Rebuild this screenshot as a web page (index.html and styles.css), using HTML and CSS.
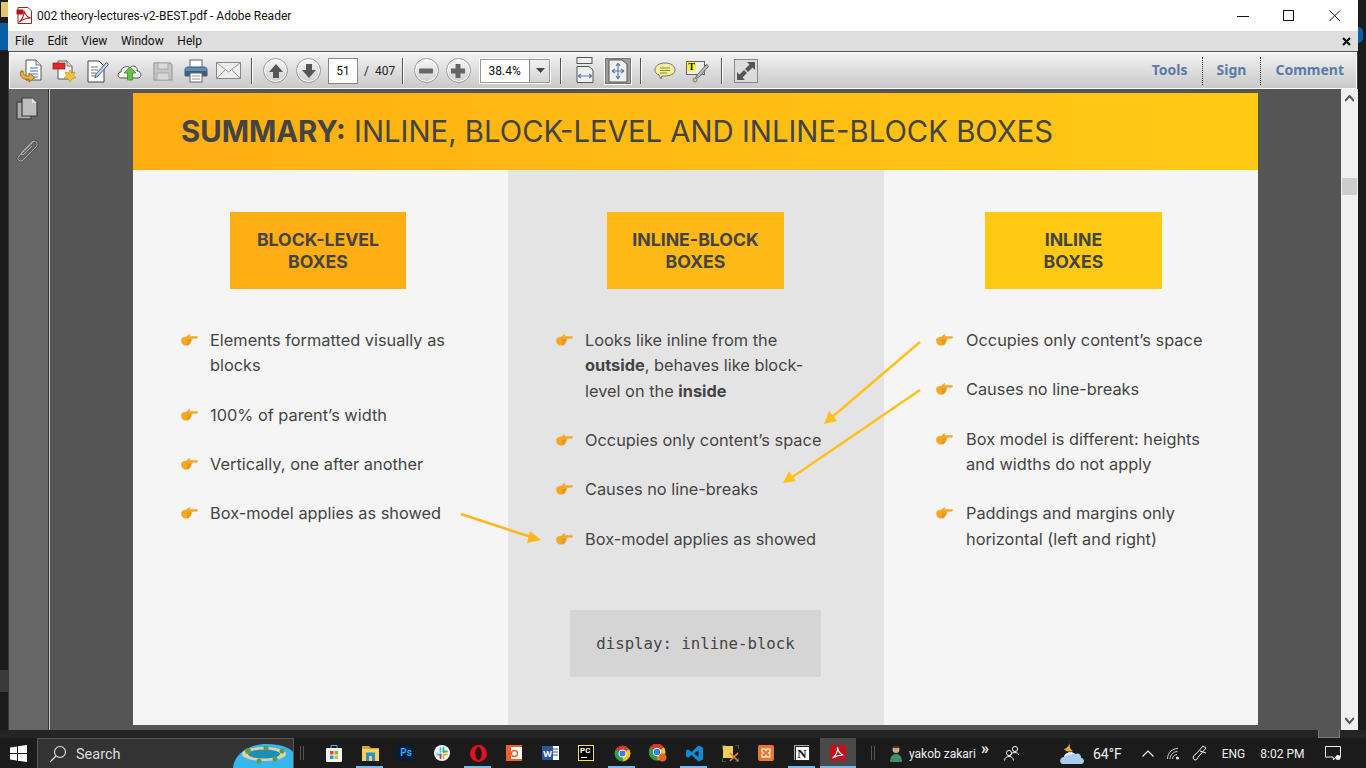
FILE: index.html
```html
<!DOCTYPE html>
<html>
<head>
  <title>002 theory-lectures-v2-BEST.pdf - Adobe Reader</title>
  <link rel="stylesheet" href="styles.css">
</head>
<body>
  <svg class="defs" width="0" height="0">
    <symbol id="hand" viewBox="0 0 17 12">
      <path d="M0.5 5.5 C1 4 2 3.4 3.4 3.2 L5.4 3 C6.4 2 7.2 1.2 8.4 0.6 C9 0.4 9.2 1 8.8 1.5 L8 2.6 L15.8 2.4 C17.2 2.5 17.2 4.1 15.8 4.2 L10.6 4.6 C11.1 5.4 10.9 6.2 10.3 6.6 C10.6 7.4 10.2 8.2 9.5 8.4 C9.6 9.3 9.1 9.9 8.4 10 C8.2 10.8 7.6 11.2 6.8 11.2 L4 11.2 C2 11.2 0.2 9.4 0.5 5.5Z" fill="#f5a623" stroke="#f5a623" stroke-width=".5"/>
      <path d="M6 6.6 L10 6.2 M6 8.4 L9.3 8.2 M6 10 L8.2 9.9" stroke="#c97f10" stroke-width=".6" fill="none"/>
    </symbol>
  </svg>

  <div class="desk-folder"></div>
  <div class="desk-blue"></div>
  <div class="desk-orb"></div>
  <div class="desk-grey"></div>
  <div class="desk-tab"></div>

  <div class="window">
    <div class="titlebar">
      <svg class="app-icon" width="17" height="17" viewBox="0 0 17 17"><path d="M2 .5H12L15.5 4V16.5H2Z" fill="#fff" stroke="#8a2a2a"/><rect x=".5" y="2.5" width="7" height="5" fill="#b3121a"/><path d="M3 15C6 13 8.500 8 8 4C10 9 12 11 15 11C11 11 7 12 3 15Z" fill="none" stroke="#c21a1a" stroke-width="1.100"/></svg>
      <span class="doc-title">002 theory-lectures-v2-BEST.pdf - Adobe Reader</span>
      <div class="win-controls">
        <div class="win-btn"><svg width="12" height="12" viewBox="0 0 12 12"><path d="M0 6.500H12" stroke="#111"/></svg></div>
        <div class="win-btn"><svg width="12" height="12" viewBox="0 0 12 12"><rect x=".5" y=".5" width="10" height="10" fill="none" stroke="#111"/></svg></div>
        <div class="win-btn"><svg width="12" height="12" viewBox="0 0 12 12"><path d="M.5 .5L11 11M11 .5L.5 11" stroke="#111"/></svg></div>
      </div>
    </div>

    <div class="menubar">
      <span class="menu-item">File</span>
      <span class="menu-item">Edit</span>
      <span class="menu-item">View</span>
      <span class="menu-item">Window</span>
      <span class="menu-item">Help</span>
      <svg class="menu-close" width="9" height="9" viewBox="0 0 9 9"><path d="M1 1L8 8M8 1L1 8" stroke="#111" stroke-width="2.200"/></svg>
    </div>

    <div class="toolbar">
      <div class="tool"><svg width="26" height="26" viewBox="0 0 26 26"><path d="M8 2H18L23 7V22H8Z" fill="#fff" stroke="#555"/><path d="M18 2V7H23" fill="#ddd" stroke="#777"/><path d="M12 10H20M12 13H20M12 16H20M12 19H20" stroke="#3a72c4" stroke-width="1.200"/><path d="M3 13C1 19 5 22 11 21V24L17 19.500L11 15V18C7 18 5 17 5 13Z" fill="#eeb040" stroke="#a06d10"/></svg></div>
      <div class="tool"><svg width="26" height="26" viewBox="0 0 26 26"><path d="M7 3H16L21 8V21H7Z" fill="#fff" stroke="#555"/><path d="M16 3V8H21" fill="#ddd" stroke="#777"/><rect x="2" y="5" width="12" height="6" fill="#e02a2a" stroke="#8e1414" stroke-width=".7"/><path d="M19 12L20.500 15L24 14L22.500 17.500L25 20L21.500 20.500L19 24L16.500 20.500L13 20L15.500 17.500L14 14L17.500 15Z" fill="#f3c23c" stroke="#b88a18" stroke-width=".6"/></svg></div>
      <div class="tool"><svg width="26" height="26" viewBox="0 0 26 26"><path d="M4 3H15L20 8V24H4Z" fill="#fff" stroke="#444"/><path d="M7 9H14M7 12H14M7 15H12M7 18H11" stroke="#777"/><path d="M11 20L12 16L22 5C23 4 25 6 24 7L14 18Z" fill="#c6d8ec" stroke="#3d5d80"/></svg></div>
      <div class="tool"><svg width="26" height="26" viewBox="0 0 26 26"><path d="M4 20C0 20 0 14 4 14C4 9 10 7 13 10C16 6 21 9 20 13C25 13 25 20 21 20Z" fill="#f4f4f4" stroke="#555"/><path d="M13 9L19 15H15.500V22H10.500V15H7Z" fill="#6cc04a" stroke="#3b8a24" stroke-width=".8"/></svg></div>
      <div class="tool"><svg width="24" height="24" viewBox="0 0 24 24"><path d="M3 4H19L21 6V21H3Z" fill="#c6c6c6" stroke="#a4a4a4" stroke-width="1.400"/><rect x="7" y="4" width="10" height="6" fill="#dcdcdc" stroke="#aaa"/><rect x="6" y="14" width="12" height="7" fill="#d8d8d8" stroke="#aaa"/></svg></div>
      <div class="tool"><svg width="26" height="26" viewBox="0 0 26 26"><rect x="7" y="2" width="12" height="8" fill="#fff" stroke="#666"/><path d="M5 9H21C23 9 24 10 24 12V18H2V12C2 10 3 9 5 9Z" fill="#5f8bb5" stroke="#3d5f80"/><rect x="2" y="13" width="22" height="5" fill="#3c5e80"/><rect x="7" y="15" width="12" height="9" fill="#fff" stroke="#666"/><path d="M9 18H17M9 21H17" stroke="#999"/></svg></div>
      <div class="tool"><svg width="26" height="18" viewBox="0 0 26 18"><rect x=".5" y=".5" width="24" height="16" fill="#eee" stroke="#888"/><path d="M.5 .5L12.500 10L24.500 .5M.5 16.500L9 8M24.500 16.500L16 8" fill="none" stroke="#999"/></svg></div>
      <div class="sep"></div>
      <div class="tool"><div class="round"><svg width="16" height="16" viewBox="0 0 16 16"><path d="M8 1L15 9H11V15H5V9H1Z" fill="#555"/></svg></div></div>
      <div class="tool"><div class="round"><svg width="16" height="16" viewBox="0 0 16 16"><path d="M8 15L15 7H11V1H5V7H1Z" fill="#555"/></svg></div></div>
      <div class="page-box">51</div>
      <span class="page-of">/</span>
      <span class="page-total">407</span>
      <div class="sep sep-after-pages"></div>
      <div class="tool tool-zoom"><div class="round"><svg width="16" height="16" viewBox="0 0 16 16"><rect x="1" y="5.500" width="14" height="5" rx="1" fill="#666"/></svg></div></div>
      <div class="tool tool-zoom"><div class="round"><svg width="16" height="16" viewBox="0 0 16 16"><path d="M5.500 1H10.500V5.500H15V10.500H10.500V15H5.500V10.500H1V5.500H5.500Z" fill="#666"/></svg></div></div>
      <div class="zoom-box">
        <span class="zoom-value">38.4%</span>
        <span class="zoom-drop"><svg width="9" height="5" viewBox="0 0 9 5"><path d="M0 0H9L4.500 5Z" fill="#444"/></svg></span>
      </div>
      <div class="sep sep-after-zoom"></div>
      <div class="tool tool-fit"><svg width="20" height="30" viewBox="0 0 20 30"><rect x="2" y="1.500" width="15" height="6" fill="#eee" stroke="#555"/><path d="M2 10.500H14L18 14V26.500H2Z" fill="#eee" stroke="#555"/><path d="M3 20H17M3 20L6 18M3 20L6 22M17 20L14 18M17 20L14 22" stroke="#5e7fb2" fill="none" stroke-width="1.200"/></svg></div>
      <div class="tool tool-fit tool-active"><svg width="20" height="24" viewBox="0 0 20 24"><path d="M1 1H14L19 5V23H1Z" fill="#f0f0f0" stroke="#555"/><path d="M10 4V20M4 12H16M10 4L8 7M10 4L12 7M10 20L8 17M10 20L12 17M4 12L7 10M4 12L7 14M16 12L13 10M16 12L13 14" stroke="#5e7fb2" fill="none" stroke-width="1.200"/></svg></div>
      <div class="sep sep-after-fit"></div>
      <div class="tool"><svg width="22" height="18" viewBox="0 0 22 18"><path d="M11 1C17 1 21 4 21 8C21 12 16 14 11 14C10 14 9 14 8 14L7 17L5 13C2 12 1 10 1 8C1 4 5 1 11 1Z" fill="#f6ef9a" stroke="#777"/><path d="M6 6H16M6 8.500H16M6 11H13" stroke="#8a8540"/></svg></div>
      <div class="tool"><svg width="24" height="24" viewBox="0 0 24 24"><rect x=".5" y="2.500" width="18" height="13" fill="#eee" stroke="#666"/><rect x="1" y="3" width="9" height="9" fill="#f7f33a"/><text class="tool-t" x="5.500" y="11">T</text><path d="M9 20L11 16L20 6C21 5 23 7 22 8L13 18Z" fill="#bbb" stroke="#666"/><circle cx="9" cy="21" r="2" fill="#e3d25e" stroke="#777"/></svg></div>
      <div class="sep sep-after-note"></div>
      <div class="tool tool-full"><div class="full-box"><svg width="20" height="20" viewBox="0 0 20 20"><path d="M11 1H19V9L16.500 6.500L12 11L9 8L13.500 3.500ZM9 19H1V11L3.500 13.500L8 9L11 12L6.500 16.500Z" fill="#555"/></svg></div></div>
      <div class="panel-tabs">
        <span class="panel-tab panel-tools">Tools</span>
        <span class="panel-tab panel-sign">Sign</span>
        <span class="panel-tab panel-comment">Comment</span>
      </div>
    </div>

    <div class="workspace">
      <div class="nav-panel">
        <svg width="22" height="24" viewBox="0 0 22 24"><rect x="1" y="5" width="14" height="17" fill="#aaa" stroke="#3c3c3c" stroke-width="1.200"/><path d="M6 1H16L21 6V19H6Z" fill="#bdbdbd" stroke="#3c3c3c" stroke-width="1.200"/><path d="M16 1V6H21" fill="#e0e0e0"/></svg>
        <svg width="24" height="26" viewBox="0 0 24 26"><path d="M19 3L4 18C1 21 5 25 8 22L21 9C24 5 20 1 17 4L7 14C5 16 7 18 9 16L17 8" fill="none" stroke="#3f3f3f" stroke-width="2.400"/><path d="M19 3L4 18C1 21 5 25 8 22L21 9C24 5 20 1 17 4L7 14C5 16 7 18 9 16L17 8" fill="none" stroke="#a8a8a8" stroke-width="1.100"/></svg>
      </div>
      <div class="doc-area">
        <div class="page">
          <div class="page-head"><b>SUMMARY:</b> INLINE, BLOCK-LEVEL AND INLINE-BLOCK BOXES</div>
          <div class="page-cols">
            <div class="col">
              <div class="card card-a">BLOCK-LEVEL<br>BOXES</div>
              <ul class="points">
                <li><svg class="hand"><use href="#hand"/></svg><span>Elements formatted visually as blocks</span></li>
                <li><svg class="hand"><use href="#hand"/></svg><span>100% of parent’s width</span></li>
                <li><svg class="hand"><use href="#hand"/></svg><span>Vertically, one after another</span></li>
                <li><svg class="hand"><use href="#hand"/></svg><span>Box-model applies as showed</span></li>
              </ul>
            </div>
            <div class="col col-mid">
              <div class="card card-b">INLINE-BLOCK<br>BOXES</div>
              <ul class="points">
                <li><svg class="hand"><use href="#hand"/></svg><span>Looks like inline from the <b>outside</b>, behaves like block-level on the <b>inside</b></span></li>
                <li><svg class="hand"><use href="#hand"/></svg><span>Occupies only content’s space</span></li>
                <li><svg class="hand"><use href="#hand"/></svg><span>Causes no line-breaks</span></li>
                <li><svg class="hand"><use href="#hand"/></svg><span>Box-model applies as showed</span></li>
              </ul>
              <div class="code-box">display: inline-block</div>
            </div>
            <div class="col col-right">
              <div class="card card-c">INLINE<br>BOXES</div>
              <ul class="points">
                <li><svg class="hand"><use href="#hand"/></svg><span>Occupies only content’s space</span></li>
                <li><svg class="hand"><use href="#hand"/></svg><span>Causes no line-breaks</span></li>
                <li><svg class="hand"><use href="#hand"/></svg><span>Box model is different: heights and widths do not apply</span></li>
                <li><svg class="hand"><use href="#hand"/></svg><span>Paddings and margins only horizontal (left and right)</span></li>
              </ul>
            </div>
          </div>
          <svg class="arrows" width="1125" height="632" viewBox="0 0 1125 632">
            <path d="M328 421L398 444" stroke="#ffb61e" stroke-width="2.500"/><path d="M408 447L394 450L397 438Z" fill="#ffb61e"/>
            <path d="M787 249L698 325" stroke="#ffc11e" stroke-width="2.500"/><path d="M691 331L696 318L704 328Z" fill="#ffc11e"/>
            <path d="M787 297L658 385" stroke="#ffc11e" stroke-width="2.500"/><path d="M650 390L656 378L663 388Z" fill="#ffc11e"/>
          </svg>
        </div>
      </div>
      <div class="scrollbar">
        <svg class="scroll-arrow" width="9" height="7" viewBox="0 0 9 7"><path d="M0 6L4.500 1L9 6" fill="none" stroke="#555" stroke-width="2"/></svg>
        <div class="scroll-thumb"></div>
        <svg class="scroll-arrow scroll-down" width="9" height="7" viewBox="0 0 9 7"><path d="M0 1L4.500 6L9 1" fill="none" stroke="#555" stroke-width="2"/></svg>
      </div>
    </div>
  </div>

  <div class="under-strip"></div>

  <div class="taskbar">
    <div class="start"><svg width="17" height="17" viewBox="0 0 17 17"><path d="M0 2.400L7 1.400V8H0ZM8 1.200L17 0V8H8ZM0 9H7V15.600L0 14.600ZM8 9H17V17L8 15.800Z" fill="#fff"/></svg></div>
    <div class="search">
      <svg width="18" height="18" viewBox="0 0 18 18"><circle cx="11" cy="7" r="5.500" fill="none" stroke="#e6e6e6" stroke-width="1.100"/><path d="M7 11L1 17" stroke="#e6e6e6" stroke-width="1.100"/></svg>
      <span class="search-text">Search</span>
      <svg class="search-art" width="60" height="25" viewBox="0 0 60 25"><path d="M0 25C1 12 14 1 34 1C48 1 57 5 60 9V25Z" fill="#35b6ee"/><ellipse cx="31" cy="11" rx="22" ry="7" fill="#e8cfa0"/><ellipse cx="31" cy="11" rx="16" ry="4.500" fill="#1a8fb8"/><circle cx="15" cy="8" r="3" fill="#5d9a4a"/><circle cx="33" cy="5" r="2.500" fill="#5d9a4a"/><circle cx="49" cy="8" r="2.500" fill="#5d9a4a"/><circle cx="42" cy="16" r="2.500" fill="#5d9a4a"/><circle cx="26" cy="18" r="2.500" fill="#5d9a4a"/></svg>
    </div>
    <div class="task-divider"></div>
    <div class="task-icons">
      <div class="task-cell"><svg width="16" height="18" viewBox="0 0 16 18"><path d="M5 4V1.500H11V4" fill="none" stroke="#4fb4e8"/><rect x="0" y="4" width="16" height="14" rx="1" fill="#f4f4f4"/><rect x="4" y="7" width="3.500" height="3.500" fill="#e2492f"/><rect x="8.500" y="7" width="3.500" height="3.500" fill="#7db93a"/><rect x="4" y="11.500" width="3.500" height="3.500" fill="#2c9ae0"/><rect x="8.500" y="11.500" width="3.500" height="3.500" fill="#f2b71f"/></svg></div>
      <div class="task-cell task-on"><svg width="17" height="15" viewBox="0 0 17 15"><path d="M0 0H7L9 2H17V4H0Z" fill="#d9a431"/><rect y="3" width="17" height="12" fill="#f7d25c"/><rect x="4" y="6.500" width="9" height="8.500" fill="#2a8fd8"/><rect x="7" y="10" width="3" height="5" fill="#f7d25c"/></svg></div>
      <div class="task-cell"><div class="ps-icon">Ps</div></div>
      <div class="task-cell"><svg width="16" height="16" viewBox="0 0 16 16"><circle cx="8" cy="8" r="8" fill="#f6f6f6"/><path d="M6.500 3V7M3 9.500H7" stroke="#36c5f0" stroke-width="1.800" stroke-linecap="round"/><path d="M9.500 3V7" stroke="#2eb67d" stroke-width="1.800" stroke-linecap="round"/><path d="M13 6.500H9.500" stroke="#2eb67d" stroke-width="1.800" stroke-linecap="round"/><path d="M9.500 9.500V13M13 9.500H9.500" stroke="#ecb22e" stroke-width="1.800" stroke-linecap="round"/><path d="M6.500 10V13" stroke="#e01e5a" stroke-width="1.800" stroke-linecap="round"/></svg></div>
      <div class="task-cell task-on"><svg width="17" height="17" viewBox="0 0 17 17"><circle cx="8.500" cy="8.500" r="8.500" fill="#e3101f"/><ellipse cx="8.500" cy="8.500" rx="3.200" ry="6.500" fill="#1a1a1a"/></svg></div>
      <div class="task-cell"><svg width="16" height="16" viewBox="0 0 16 16"><rect width="16" height="16" fill="#fff"/><path d="M0 0H5V16H0ZM5 0H16V2H5ZM5 14H16V16H5Z" fill="#e8622c"/><circle cx="8.500" cy="8.500" r="3" fill="none" stroke="#e8622c" stroke-width="1.400"/></svg></div>
      <div class="task-cell"><svg width="17" height="16" viewBox="0 0 17 16"><rect x="6" y="1" width="11" height="14" fill="#fff"/><path d="M10 4H16M10 7H16M10 10H16" stroke="#2b5aa8"/><rect y="1" width="11" height="14" fill="#2b579a"/><text class="word-w" x="5.500" y="11.500">W</text></svg></div>
      <div class="task-cell"><div class="pc-icon">PC<i></i></div></div>
      <div class="task-cell task-on"><svg width="17" height="17" viewBox="0 0 18 18"><path d="M9 9L2.070 5A8 8 0 0 1 15.930 5Z" fill="#d9382c" stroke="#d9382c"/><path d="M9 9L15.930 5A8 8 0 0 1 9 17Z" fill="#f5c518" stroke="#f5c518"/><path d="M9 9L9 17A8 8 0 0 1 2.070 5Z" fill="#2f9e4f" stroke="#2f9e4f"/><circle cx="9" cy="9" r="4.200" fill="#fff"/><circle cx="9" cy="9" r="3.200" fill="#3b7de0"/></svg></div>
      <div class="task-cell"><svg width="18" height="18" viewBox="0 0 18 18"><path d="M8 8L1.070 4A8 8 0 0 1 14.930 4Z" fill="#d9382c" stroke="#d9382c"/><path d="M8 8L14.930 4A8 8 0 0 1 8 16Z" fill="#f5c518" stroke="#f5c518"/><path d="M8 8L8 16A8 8 0 0 1 1.070 4Z" fill="#2f9e4f" stroke="#2f9e4f"/><circle cx="8" cy="8" r="4.200" fill="#fff"/><circle cx="8" cy="8" r="3.200" fill="#3b7de0"/><circle cx="13.500" cy="13.500" r="4" fill="#e8622c"/></svg></div>
      <div class="task-cell task-on"><svg width="17" height="17" viewBox="0 0 17 17"><path fill-rule="evenodd" d="M12.500 .5L17 2.500V14.500L12.500 16.500L5.500 10L2 12.800L0 11.500V5.500L2 4.200L5.500 7ZM12.500 5L8 8.500L12.500 12Z" fill="#0f8ad8"/></svg></div>
      <div class="task-cell"><svg width="17" height="17" viewBox="0 0 17 17"><rect x="1" y="1" width="10" height="12" fill="#f1cc5a"/><path d="M0 4V0H4M13 0H17V4M0 13V17H4M17 13V17H13" fill="none" stroke="#3f9a5a" stroke-width="1.200"/><path d="M8 8L16 16M16 8L8 16" stroke="#e8822c" stroke-width="1.600"/></svg></div>
      <div class="task-cell"><svg width="16" height="16" viewBox="0 0 16 16"><rect width="16" height="16" rx="2" fill="#e8772e"/><path d="M4 4H7L8 5.500L9 4H12V7L10.500 8L12 9V12H9L8 10.500L7 12H4V9L5.500 8L4 7Z" fill="none" stroke="#fbe3cf" stroke-width="1.400"/></svg></div>
      <div class="task-cell task-on"><div class="notion-icon">N</div></div>
      <div class="task-cell task-on task-active"><svg width="16" height="16" viewBox="0 0 16 16"><rect width="16" height="16" rx="1" fill="#c1121c"/><path d="M2.500 13C6 11 8 6 7.500 2.500C8.500 7 10 9.500 13.500 10C10 10 6 11 2.500 13Z" fill="none" stroke="#fff" stroke-width="1.200"/></svg></div>
    </div>
    <div class="task-divider task-divider-b"></div>
    <svg class="avatar" width="12" height="17" viewBox="0 0 12 17"><circle cx="6" cy="4.500" r="3.500" fill="#c9a58a"/><path d="M3 3C3 0 9 0 9 3Z" fill="#3a3a3a"/><path d="M0 17C0 11 3 9 6 9C9 9 12 11 12 17Z" fill="#3f8f6a"/></svg>
    <span class="user-name">yakob zakari</span>
    <span class="chevrons">»</span>
    <svg class="people" width="15" height="16" viewBox="0 0 15 16"><circle cx="11" cy="4" r="2.600" fill="none" stroke="#eee"/><path d="M6 12C6 9 8 7.500 11 7.500C13 7.500 14.500 8.500 15 10" fill="none" stroke="#eee"/><circle cx="5" cy="8" r="2.600" fill="none" stroke="#eee" /><path d="M.5 15.500C.5 13 2.500 11.500 5 11.500C7.500 11.500 9.500 13 9.500 15.500" fill="none" stroke="#eee"/></svg>
    <svg class="weather" width="25" height="24" viewBox="0 0 25 24"><path d="M11 0C9 3 9 8 13 10C11 11 6 11 4 8C6 8 9 5 11 0Z" fill="#f5a623"/><path d="M3 23C-1 23 -1 16 4 16C5 11 12 10 15 13C19 11 22 15 21 17C25 17 25 23 21 23Z" fill="#a9cdf0"/><path d="M4 16C5 11 12 10 15 13C12 13 7 14 4 16Z" fill="#e3eefa"/></svg>
    <span class="temp">64°F</span>
    <svg class="tray-up" width="12" height="7" viewBox="0 0 12 7"><path d="M.5 6.500L6 1L11.500 6.500" fill="none" stroke="#eee" stroke-width="1.200"/></svg>
    <svg class="tray-wifi" width="13" height="13" viewBox="0 0 13 13"><path d="M.5 12C.5 6 5 1.500 11 1.500M3 12C3 8 6.500 4.500 10.500 4.500M5.500 12C5.500 9.500 7.500 7.500 10 7.500" fill="none" stroke="#ddd" stroke-width=".9"/><circle cx="10.500" cy="11" r="1.500" fill="#eee"/></svg>
    <svg class="tray-pen" width="16" height="16" viewBox="0 0 16 16"><path d="M3 15C0 14 1 10 4 9L11 1L14 3L7 11C5 14 5 15 3 15ZM8 6L14 8" fill="none" stroke="#eee" stroke-width="1"/></svg>
    <span class="lang">ENG</span>
    <span class="clock">8:02 PM</span>
    <svg class="notify" width="16" height="15" viewBox="0 0 16 15"><path d="M.5 .500H15.500V11H11L8.500 14L8 11H.5Z" fill="none" stroke="#eee"/><circle cx="13" cy="11.500" r="2.500" fill="#eee"/></svg>
  </div>
</body>
</html>
```

FILE: styles.css
```css
* {
  box-sizing: border-box;
}

html, body {
  margin: 0;
  padding: 0;
}

body {
  position: relative;
  width: 1366px;
  height: 768px;
  overflow: hidden;
  background-color: #1b1b1b;
  font-family: Roboto, sans-serif;
}

.defs {
  position: absolute;
}

/* bits of the desktop showing round the window */
.desk-folder {
  position: absolute;
  left: 1px;
  top: 2px;
  width: 7px;
  height: 15px;
  background-color: #e3c56c;
}

.desk-blue {
  position: absolute;
  left: 0;
  top: 23px;
  width: 8px;
  height: 27px;
  background-color: #0a5ea8;
}

.desk-orb {
  position: absolute;
  left: 1358px;
  top: 27px;
  width: 5px;
  height: 16px;
  border-radius: 0 8px 8px 0;
  background-color: #0a5ea8;
}

.desk-grey {
  position: absolute;
  left: 0;
  top: 670px;
  width: 8px;
  height: 22px;
  background-color: #3a3a3a;
}

.desk-tab {
  position: absolute;
  left: 1318px;
  top: 730px;
  width: 22px;
  height: 8px;
  background-color: #555;
  border: 1px solid #777;
  border-top: 0;
}

.window {
  position: relative;
  width: 1350px;
  height: 730px;
  margin-left: 8px;
  display: flex;
  flex-direction: column;
  background-color: #3a3a3a;
}

.titlebar {
  height: 31px;
  display: flex;
  align-items: center;
  background-color: #fff;
  padding-left: 8px;
}

.app-icon {
  margin-right: 4px;
}

.doc-title {
  font-size: 12px;
  color: #111;
}

.win-controls {
  display: flex;
  margin-left: auto;
}

.win-btn {
  width: 46px;
  height: 31px;
  display: flex;
  align-items: center;
  justify-content: center;
}

.menubar {
  height: 20px;
  display: flex;
  align-items: center;
  background-color: #dedede;
  padding-left: 7px;
  font-size: 12px;
  color: #111;
}

.menu-item {
  margin-right: 13.600px;
}

.menu-close {
  margin-left: auto;
  margin-right: 7px;
}

.toolbar {
  height: 37px;
  margin: 1px 1px 0 1px;
  display: flex;
  align-items: center;
  padding-left: 4px;
  border: 1px solid #fff;
  background: linear-gradient(#f2f2f2, #c9c9c9);
  box-shadow: 0 -1px 0 #555;
}

.tool {
  width: 33px;
  height: 30px;
  flex: none;
  display: flex;
  align-items: center;
  justify-content: center;
}

.sep {
  width: 2px;
  height: 26px;
  flex: none;
  margin: 0 6px;
  background: linear-gradient(90deg, #555 50%, #fff 50%);
}

.round {
  width: 25px;
  height: 25px;
  display: flex;
  align-items: center;
  justify-content: center;
  border-radius: 50%;
  border: 1px solid #9a9a9a;
  background: linear-gradient(#f6f6f6, #cfcfcf);
  box-shadow: inset 0 0 0 1px #fff;
}

.page-box {
  width: 30px;
  height: 26px;
  margin-left: 3px;
  background-color: #fff;
  border: 1px solid #888;
  font-size: 12px;
  line-height: 24px;
  text-align: center;
  color: #111;
}

.page-of {
  margin-left: 6px;
  font-size: 12px;
  color: #222;
}

.page-total {
  margin-left: 6px;
  font-size: 12px;
  color: #222;
}

.sep-after-pages {
  margin-left: 7px;
  margin-right: 6px;
}

.tool-zoom {
  width: 32px;
}

.zoom-box {
  width: 72px;
  height: 26px;
  margin-left: 5px;
  flex: none;
  display: flex;
  border: 1px solid #fff;
  outline: 1px solid #999;
  outline-offset: -2px;
  background-color: #fff;
}

.zoom-value {
  width: 49px;
  font-size: 12px;
  line-height: 24px;
  text-align: center;
  color: #111;
}

.zoom-drop {
  flex: 1;
  display: flex;
  align-items: center;
  justify-content: center;
  background: linear-gradient(#f2f2f2, #d4d4d4);
  border-left: 1px solid #888;
}

.sep-after-zoom {
  margin-left: 9px;
  margin-right: 8px;
}

.tool-fit {
  width: 30px;
}

.tool-active {
  width: 28px;
  height: 28px;
  margin-left: 4px;
  background-color: #9d9d9d;
  border: 1px solid #fff;
  outline: 1px solid #777;
  outline-offset: -2px;
}

.sep-after-fit {
  margin-left: 8px;
  margin-right: 6px;
}

.sep-after-note {
  margin-left: 7px;
  margin-right: 6px;
}

.full-box {
  width: 24px;
  height: 24px;
  display: flex;
  align-items: center;
  justify-content: center;
  border: 1px solid #888;
  background-color: #dcdcdc;
}

.panel-tabs {
  margin-left: auto;
  height: 28px;
  display: flex;
  align-items: center;
  font-family: "Noto Sans", sans-serif;
  font-weight: 700;
  font-size: 14px;
  color: #5b7ba6;
}

.panel-tab {
  height: 28px;
  line-height: 26px;
}

.panel-tools {
  padding-right: 14px;
}

.panel-sign {
  padding: 0 14px;
  border-left: 1px dotted #333;
  border-right: 1px dotted #333;
}

.panel-comment {
  padding: 0 12px 0 14px;
}

.workspace {
  flex: 1;
  min-height: 0;
  display: flex;
}

.nav-panel {
  width: 40px;
  margin-left: 1px;
  padding-top: 8px;
  padding-right: 3px;
  display: flex;
  flex-direction: column;
  align-items: center;
  gap: 17px;
  background-color: #666;
  border-right: 1px solid #333;
}

.doc-area {
  flex: 1;
  border-left: 1px solid #c8c8c8;
  background-color: #555;
  padding: 4px 0 0 83px;
}

.page {
  position: relative;
  width: 1125px;
  height: 632px;
  font-family: Inter, sans-serif;
  color: #444;
}

.page-head {
  height: 77px;
  padding-left: 48px;
  font-size: 29.300px;
  line-height: 78px;
  color: #444;
  background: linear-gradient(90deg, #ffae12, #ffca14);
}

.page-cols {
  display: grid;
  grid-template-columns: 375px 376px 374px;
  height: 555px;
  background-color: #f5f5f5;
}

.col {
  padding-top: 42px;
}

.col-mid {
  background-color: #e4e4e4;
}

.card {
  width: 176px;
  height: 77px;
  margin-left: 97px;
  display: flex;
  align-items: center;
  justify-content: center;
  text-align: center;
  font-size: 17.700px;
  line-height: 22px;
  font-weight: 700;
  color: #444;
}

.card-a {
  background-color: #ffae14;
}

.card-b {
  width: 177px;
  margin-left: 99px;
  background-color: #ffb916;
}

.card-c {
  width: 177px;
  margin-left: 101px;
  background-color: #ffc914;
}

.points {
  list-style: none;
  margin: 39px 0 0 0;
  padding: 0 0 0 48px;
  display: flex;
  flex-direction: column;
  gap: 23.900px;
  font-size: 16.350px;
  line-height: 25.400px;
}

.col-right .points {
  padding-left: 52px;
}

.points li {
  display: flex;
  width: 300px;
}

.hand {
  width: 17px;
  height: 12px;
  flex: none;
  margin-top: 6px;
  margin-right: 12px;
}

.col-right .hand {
  margin-right: 13px;
}

.points span {
  width: 240px;
}

.code-box {
  width: 251px;
  height: 67px;
  margin: 57.500px 0 0 62px;
  background-color: #d5d5d5;
  font-family: "DejaVu Sans Mono", monospace;
  font-size: 15.700px;
  line-height: 67px;
  text-align: center;
  color: #444;
}

.arrows {
  position: absolute;
  left: 0;
  top: 0;
}

.scrollbar {
  width: 17px;
  display: flex;
  flex-direction: column;
  align-items: center;
  background-color: #f0f0f0;
}

.scroll-arrow {
  flex: none;
  margin-top: 6px;
}

.scroll-thumb {
  width: 15px;
  height: 17px;
  margin-top: 76px;
  background-color: #cdcdcd;
}

.scroll-down {
  margin-top: auto;
  margin-bottom: 6px;
}

.under-strip {
  height: 8px;
  background-color: #242424;
}

.taskbar {
  height: 30px;
  display: flex;
  align-items: center;
  background-color: #1b1b1b;
  color: #eee;
  font-size: 12px;
}

.start {
  width: 37px;
  height: 30px;
  display: flex;
  align-items: center;
  justify-content: center;
}

.search {
  position: relative;
  width: 257px;
  height: 30px;
  display: flex;
  align-items: center;
  padding-left: 11px;
  background-color: #333;
  border: 1px solid #585858;
  border-bottom: 0;
  overflow: hidden;
}

.search-text {
  margin-left: 9px;
  margin-top: 2px;
  font-size: 14.500px;
  color: #ddd;
}

.search-art {
  position: absolute;
  right: 0;
  bottom: 0;
}

.task-divider {
  width: 4px;
  height: 14px;
  flex: none;
  margin-left: 6px;
  margin-right: 12px;
  border-left: 1px solid #555;
  border-right: 1px solid #555;
}

.task-icons {
  display: flex;
}

.task-cell {
  position: relative;
  width: 36px;
  height: 30px;
  display: flex;
  align-items: center;
  justify-content: center;
}

.task-on::after {
  content: "";
  position: absolute;
  left: 4px;
  right: 5px;
  bottom: 0;
  height: 2px;
  background-color: #76b9ed;
}

.task-active {
  background-color: #4a4a4a;
}

.task-active::after {
  left: 0;
  right: 0;
}

.ps-icon {
  width: 16px;
  height: 16px;
  border-radius: 2px;
  background-color: #001e36;
  color: #31a8ff;
  font-size: 10px;
  font-weight: 700;
  line-height: 16px;
  text-align: center;
}

.word-w {
  font-family: "Noto Sans", sans-serif;
  font-size: 9px;
  font-weight: 700;
  fill: #fff;
  text-anchor: middle;
}

.tool-t {
  font-family: "Liberation Serif", serif;
  font-size: 10px;
  font-weight: 700;
  fill: #222;
  text-anchor: middle;
}

.pc-icon {
  position: relative;
  width: 16px;
  height: 16px;
  background-color: #000;
  border: 1px solid #f5e23a;
  color: #fff;
  font-size: 8px;
  font-weight: 700;
  line-height: 10px;
  padding-left: 1px;
}

.pc-icon i {
  position: absolute;
  left: 2px;
  bottom: 2px;
  width: 6px;
  height: 1px;
  background-color: #fff;
}

.notion-icon {
  width: 15px;
  height: 15px;
  background-color: #fff;
  border: 1px solid #222;
  color: #111;
  font-family: "Liberation Serif", serif;
  font-size: 13px;
  font-weight: 700;
  line-height: 13px;
  text-align: center;
  box-shadow: -1px -1px 0 #aaa;
}

.task-divider-b {
  margin-left: 15px;
  margin-right: 0;
}

.avatar {
  margin-left: 15px;
}

.user-name {
  margin-left: 7px;
  margin-top: 2px;
  width: 66px;
  white-space: nowrap;
}

.chevrons {
  margin-left: 6px;
  margin-top: -10px;
  font-size: 16px;
  font-weight: 700;
}

.people {
  margin-left: 15px;
}

.weather {
  margin-left: 41px;
}

.temp {
  margin-left: 8px;
  margin-top: 2px;
  font-size: 14px;
}

.tray-up {
  margin-left: 20px;
}

.tray-wifi {
  margin-left: 13px;
}

.tray-pen {
  margin-left: 12px;
}

.lang {
  margin-left: 14px;
  margin-top: 2px;
}

.clock {
  margin-left: 15px;
  margin-top: 2px;
}

.notify {
  margin-left: 21px;
}
```
